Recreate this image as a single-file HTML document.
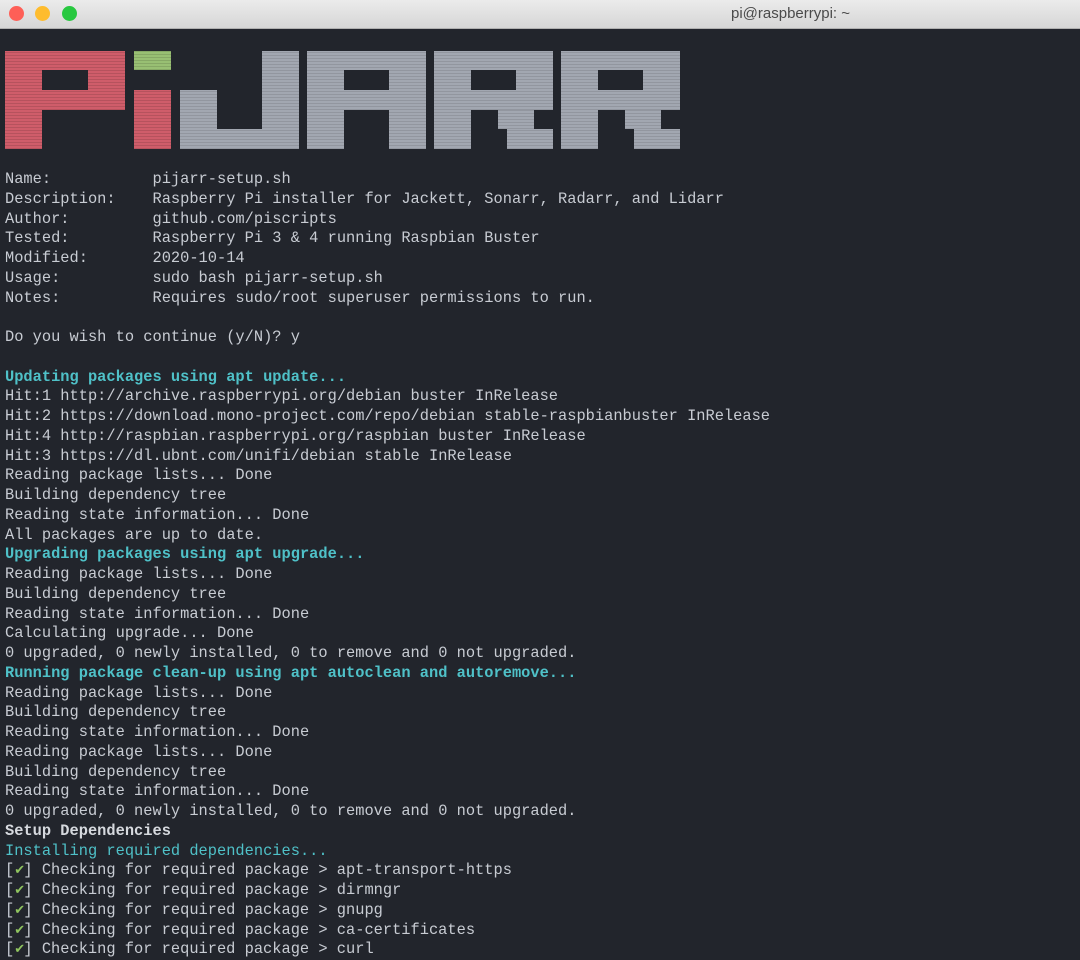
<!DOCTYPE html>
<html><head><meta charset="utf-8"><style>
html,body{margin:0;padding:0;}
body{width:1080px;height:942px;overflow:hidden;background:#22252c;position:relative;font-family:"Liberation Mono",monospace;}
.tb{position:absolute;left:0;top:0;width:1080px;height:28px;background:linear-gradient(#ebebeb,#d6d6d6);border-bottom:1px solid #b0b0b0;}
.dot{position:absolute;top:6px;width:15px;height:15px;border-radius:50%;}
.title{position:absolute;left:731px;top:5px;font:15px "Liberation Sans",sans-serif;color:#4a4a4a;}
.b{position:absolute;}
.r{background:#cf5d6a repeating-linear-gradient(0deg,rgba(0,0,0,.12) 0 1px,transparent 1px 3px);}
.g{background:#98bf73 repeating-linear-gradient(0deg,rgba(0,0,0,.12) 0 1px,transparent 1px 3px);}
.w{background:#a2a7b1 repeating-linear-gradient(0deg,rgba(0,0,0,.1) 0 1px,transparent 1px 3px);}
pre{position:absolute;left:5px;top:170px;margin:0;font-size:15.36px;line-height:19.75px;color:#c8ccd3;}
.c{color:#4fc1c8;font-weight:bold;}
.c2{color:#4fc1c8;}
.h{font-weight:bold;color:#d6d9de;}
.k{color:#8fc45f;font-size:13px;line-height:0;display:inline-block;width:9.2px;text-align:center;}
</style></head><body>
<div class="tb">
<div class="dot" style="left:9px;background:#fe5f57;"></div>
<div class="dot" style="left:35px;background:#febc2e;"></div>
<div class="dot" style="left:62px;background:#28c840;"></div>
<div class="title">pi@raspberrypi: ~</div>
</div>
<div class="b r" style="left:5px;top:51px;width:120px;height:59px"></div>
<div class="b" style="left:42px;top:70px;width:46px;height:20px;background:#22252c"></div>
<div class="b r" style="left:5px;top:110px;width:37px;height:39px"></div>
<div class="b g" style="left:134px;top:51px;width:37px;height:19px"></div>
<div class="b r" style="left:134px;top:90px;width:37px;height:59px"></div>
<div class="b w" style="left:262px;top:51px;width:37px;height:98px"></div>
<div class="b w" style="left:180px;top:90px;width:37px;height:59px"></div>
<div class="b w" style="left:180px;top:129px;width:119px;height:20px"></div>
<div class="b w" style="left:307px;top:51px;width:119px;height:98px"></div>
<div class="b" style="left:344px;top:70px;width:45px;height:20px;background:#22252c"></div>
<div class="b" style="left:344px;top:110px;width:45px;height:39px;background:#22252c"></div>
<div class="b w" style="left:434px;top:51px;width:119px;height:59px"></div>
<div class="b" style="left:471px;top:70px;width:45px;height:20px;background:#22252c"></div>
<div class="b w" style="left:434px;top:110px;width:37px;height:39px"></div>
<div class="b w" style="left:498px;top:110px;width:36px;height:19px"></div>
<div class="b w" style="left:507px;top:129px;width:46px;height:20px"></div>
<div class="b w" style="left:561px;top:51px;width:119px;height:59px"></div>
<div class="b" style="left:598px;top:70px;width:45px;height:20px;background:#22252c"></div>
<div class="b w" style="left:561px;top:110px;width:37px;height:39px"></div>
<div class="b w" style="left:625px;top:110px;width:36px;height:19px"></div>
<div class="b w" style="left:634px;top:129px;width:46px;height:20px"></div>
<pre>Name:           pijarr-setup.sh
Description:    Raspberry Pi installer for Jackett, Sonarr, Radarr, and Lidarr
Author:         github.com/piscripts
Tested:         Raspberry Pi 3 &amp; 4 running Raspbian Buster
Modified:       2020-10-14
Usage:          sudo bash pijarr-setup.sh
Notes:          Requires sudo/root superuser permissions to run.

Do you wish to continue (y/N)? y

<span class="c">Updating packages using apt update...</span>
Hit:1 http://archive.raspberrypi.org/debian buster InRelease
Hit:2 https://download.mono-project.com/repo/debian stable-raspbianbuster InRelease
Hit:4 http://raspbian.raspberrypi.org/raspbian buster InRelease
Hit:3 https://dl.ubnt.com/unifi/debian stable InRelease
Reading package lists... Done
Building dependency tree
Reading state information... Done
All packages are up to date.
<span class="c">Upgrading packages using apt upgrade...</span>
Reading package lists... Done
Building dependency tree
Reading state information... Done
Calculating upgrade... Done
0 upgraded, 0 newly installed, 0 to remove and 0 not upgraded.
<span class="c">Running package clean-up using apt autoclean and autoremove...</span>
Reading package lists... Done
Building dependency tree
Reading state information... Done
Reading package lists... Done
Building dependency tree
Reading state information... Done
0 upgraded, 0 newly installed, 0 to remove and 0 not upgraded.
<span class="h">Setup Dependencies</span>
<span class="c2">Installing required dependencies...</span>
[<span class="k">✔</span>] Checking for required package &gt; apt-transport-https
[<span class="k">✔</span>] Checking for required package &gt; dirmngr
[<span class="k">✔</span>] Checking for required package &gt; gnupg
[<span class="k">✔</span>] Checking for required package &gt; ca-certificates
[<span class="k">✔</span>] Checking for required package &gt; curl</pre>
</body></html>
